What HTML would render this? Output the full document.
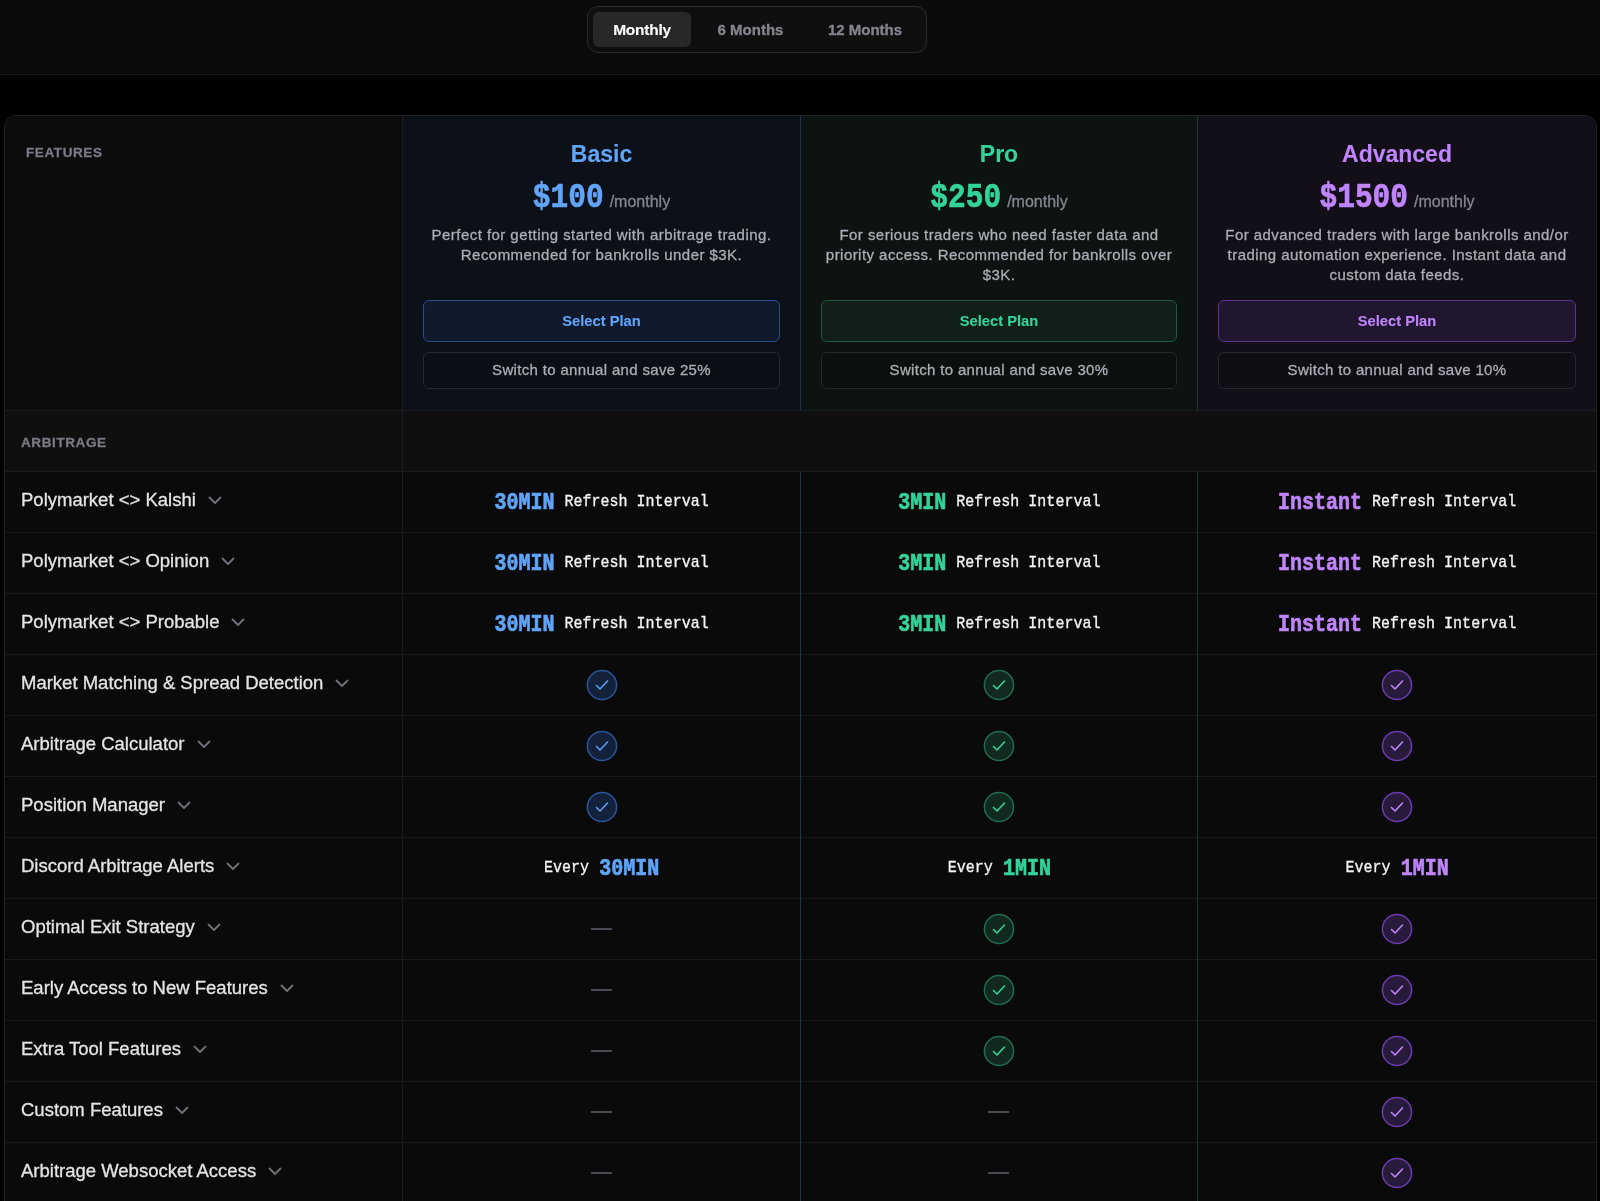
<!DOCTYPE html>
<html><head><meta charset="utf-8">
<style>
*{box-sizing:border-box;margin:0;padding:0}
html,body{-webkit-text-stroke-width:0.3px;width:1600px;height:1201px;overflow:hidden;background:#000;font-family:"Liberation Sans",sans-serif;color:#e4e4e7}
.topbar{will-change:transform;position:absolute;left:0;top:0;width:1600px;height:75px;background:#0b0b0b;border-bottom:1px solid #181818}
.toggle{position:absolute;left:587px;top:6px;width:340px;height:47px;border:1.5px solid #2b2b2b;border-radius:11px;background:#0f0f0f}
.pill{position:absolute;top:4.5px;height:35px;line-height:35px;font-weight:bold;color:#85858e;text-align:center;border-radius:6px}
.pill.active{background:#282828;color:#fff;font-size:15.5px;letter-spacing:-0.25px}
.pill{font-size:15px}
.card{will-change:transform;position:absolute;left:4px;top:115px;width:1593px;height:1200px;border:1px solid #232323;border-radius:12px;background:#0a0a0a;overflow:hidden}
.col{position:absolute;top:0}
.hdr{position:absolute;top:-1px;height:296px;border-bottom:1px solid #1c1c1c}
.label{position:absolute;font-size:13.5px;font-weight:bold;letter-spacing:0.6px;color:#7a7a85}
.title{position:absolute;left:0;right:0;text-align:center;font-size:23px;font-weight:bold}
.price{position:absolute;left:0;right:0;text-align:center;top:66.5px;height:36px}
.price b{display:inline-block;font-family:"Liberation Mono",monospace;font-size:29.5px;font-weight:bold;transform:scaleY(1.22);transform-origin:50% 75%}
.price span{position:relative;top:0.5px;font-size:16px;color:#85858e;margin-left:6px}
.desc{position:absolute;left:10px;right:10px;top:110px;text-align:center;font-size:15px;letter-spacing:0.45px;line-height:20px;color:#acacb4}
.sel{position:absolute;left:20px;right:20px;top:185px;height:42px;border-radius:6px;text-align:center;line-height:40px;font-size:14.7px;font-weight:bold}
.sw{position:absolute;left:20px;right:20px;top:237px;height:37px;border-radius:6px;border:1px solid #29292d;background:rgba(0,0,0,0.12);text-align:center;line-height:34px;font-size:15px;letter-spacing:0.33px;color:#acacb4}
.cat{position:absolute;left:0;top:295px;width:1591px;height:61px;background:#0f0f0f;border-bottom:1px solid #1c1c1c}
.row{position:absolute;left:0;width:1591px;height:61px;border-bottom:1px solid #1a1a1a}
.fname{position:absolute;left:16px;top:-2.5px;height:60px;line-height:60px;font-size:18.5px;color:#e4e4e7}
.chev{display:inline-block;vertical-align:middle;margin-left:11px;margin-top:-2px}
.cell{position:absolute;top:0;height:60px;display:flex;align-items:center;justify-content:center;font-family:"Liberation Mono",monospace;color:#f4f4f5;font-size:15px}
.cell b{display:inline-block;position:relative;top:0.5px;font-size:20px;font-weight:bold;margin-right:10px;transform:scaleY(1.18)}
.cell i{display:inline-block;position:relative;top:0.5px;font-style:normal;transform:scaleY(1.07)}
.vline{position:absolute;top:0;width:1px;height:1100px}
.blue{color:#60a5fa}.green{color:#34d399}.purple{color:#c084fc}
.dash{width:21px;height:2px;background:#4a4a52;margin-right:1px}
.sel,.title,.pill.active{-webkit-text-stroke-width:0.1px}
.cell b,.price b{-webkit-text-stroke-width:0.55px}
</style></head><body>
<div class="topbar">
  <div class="toggle">
    <div class="pill active" style="left:5px;width:98px">Monthly</div>
    <div class="pill" style="left:109px;width:107px">6 Months</div>
    <div class="pill" style="left:221px;width:112px">12 Months</div>
  </div>
</div>
<div class="card">
  <!-- header columns -->
  <div class="hdr" style="left:0;width:398px;background:#0c0c0c;border-right:1px solid #1c1c1c">
    <div class="label" style="left:21px;top:30px">FEATURES</div>
  </div>
  <div class="hdr" style="left:398px;width:398px;background:#0c1019;border-right:1px solid #1e3252">
    <div class="title blue" style="top:26px">Basic</div>
    <div class="price"><b class="blue">$100</b><span>/monthly</span></div>
    <div class="desc">Perfect for getting started with arbitrage trading.<br>Recommended for bankrolls under $3K.</div>
    <div class="sel blue" style="background:#111a2c;border:1px solid #2a4e8c">Select Plan</div>
    <div class="sw">Switch to annual and save 25%</div>
  </div>
  <div class="hdr" style="left:796px;width:397px;background:#0c1311;border-right:1px solid #1a3a30">
    <div class="title green" style="top:26px">Pro</div>
    <div class="price"><b class="green">$250</b><span>/monthly</span></div>
    <div class="desc">For serious traders who need faster data and<br>priority access. Recommended for bankrolls over<br>$3K.</div>
    <div class="sel green" style="background:#102019;border:1px solid #1d5a40">Select Plan</div>
    <div class="sw">Switch to annual and save 30%</div>
  </div>
  <div class="hdr" style="left:1193px;width:398px;background:#130f18">
    <div class="title purple" style="top:26px">Advanced</div>
    <div class="price"><b class="purple">$1500</b><span>/monthly</span></div>
    <div class="desc">For advanced traders with large bankrolls and/or<br>trading automation experience. Instant data and<br>custom data feeds.</div>
    <div class="sel purple" style="background:#21162f;border:1px solid #5b3490">Select Plan</div>
    <div class="sw">Switch to annual and save 10%</div>
  </div>
  <div class="cat"><div class="label" style="left:16px;top:24px">ARBITRAGE</div></div>
  <div class="row" style="top:356px"><div class="fname">Polymarket &lt;&gt; Kalshi<svg class="chev" width="16" height="16" viewBox="0 0 16 16"><path d="M2.5 5.5l5.5 5.5 5.5-5.5" fill="none" stroke="#71717a" stroke-width="1.8" stroke-linecap="round" stroke-linejoin="round"/></svg></div><div class="cell" style="left:397.75px;width:397.75px"><b class="blue">30MIN</b><i>Refresh Interval</i></div><div class="cell" style="left:795.5px;width:397.75px"><b class="green">3MIN</b><i>Refresh Interval</i></div><div class="cell" style="left:1193.25px;width:397.75px"><b class="purple">Instant</b><i>Refresh Interval</i></div></div>
<div class="row" style="top:417px"><div class="fname">Polymarket &lt;&gt; Opinion<svg class="chev" width="16" height="16" viewBox="0 0 16 16"><path d="M2.5 5.5l5.5 5.5 5.5-5.5" fill="none" stroke="#71717a" stroke-width="1.8" stroke-linecap="round" stroke-linejoin="round"/></svg></div><div class="cell" style="left:397.75px;width:397.75px"><b class="blue">30MIN</b><i>Refresh Interval</i></div><div class="cell" style="left:795.5px;width:397.75px"><b class="green">3MIN</b><i>Refresh Interval</i></div><div class="cell" style="left:1193.25px;width:397.75px"><b class="purple">Instant</b><i>Refresh Interval</i></div></div>
<div class="row" style="top:478px"><div class="fname">Polymarket &lt;&gt; Probable<svg class="chev" width="16" height="16" viewBox="0 0 16 16"><path d="M2.5 5.5l5.5 5.5 5.5-5.5" fill="none" stroke="#71717a" stroke-width="1.8" stroke-linecap="round" stroke-linejoin="round"/></svg></div><div class="cell" style="left:397.75px;width:397.75px"><b class="blue">30MIN</b><i>Refresh Interval</i></div><div class="cell" style="left:795.5px;width:397.75px"><b class="green">3MIN</b><i>Refresh Interval</i></div><div class="cell" style="left:1193.25px;width:397.75px"><b class="purple">Instant</b><i>Refresh Interval</i></div></div>
<div class="row" style="top:539px"><div class="fname">Market Matching &amp; Spread Detection<svg class="chev" width="16" height="16" viewBox="0 0 16 16"><path d="M2.5 5.5l5.5 5.5 5.5-5.5" fill="none" stroke="#71717a" stroke-width="1.8" stroke-linecap="round" stroke-linejoin="round"/></svg></div><div class="cell" style="left:397.75px;width:397.75px"><svg width="32" height="32" viewBox="0 0 32 32"><circle cx="16" cy="16" r="14.6" fill="#14213b" stroke="#28559c" stroke-width="1.5"/><path d="M10.5 16.5l3.5 3.5 7.5-8" fill="none" stroke="#5b9ef0" stroke-width="1.6" stroke-linecap="round" stroke-linejoin="round"/></svg></div><div class="cell" style="left:795.5px;width:397.75px"><svg width="32" height="32" viewBox="0 0 32 32"><circle cx="16" cy="16" r="14.6" fill="#11291f" stroke="#1f6b4d" stroke-width="1.5"/><path d="M10.5 16.5l3.5 3.5 7.5-8" fill="none" stroke="#34d399" stroke-width="1.6" stroke-linecap="round" stroke-linejoin="round"/></svg></div><div class="cell" style="left:1193.25px;width:397.75px"><svg width="32" height="32" viewBox="0 0 32 32"><circle cx="16" cy="16" r="14.6" fill="#271a3b" stroke="#6a3bad" stroke-width="1.5"/><path d="M10.5 16.5l3.5 3.5 7.5-8" fill="none" stroke="#c084fc" stroke-width="1.6" stroke-linecap="round" stroke-linejoin="round"/></svg></div></div>
<div class="row" style="top:600px"><div class="fname">Arbitrage Calculator<svg class="chev" width="16" height="16" viewBox="0 0 16 16"><path d="M2.5 5.5l5.5 5.5 5.5-5.5" fill="none" stroke="#71717a" stroke-width="1.8" stroke-linecap="round" stroke-linejoin="round"/></svg></div><div class="cell" style="left:397.75px;width:397.75px"><svg width="32" height="32" viewBox="0 0 32 32"><circle cx="16" cy="16" r="14.6" fill="#14213b" stroke="#28559c" stroke-width="1.5"/><path d="M10.5 16.5l3.5 3.5 7.5-8" fill="none" stroke="#5b9ef0" stroke-width="1.6" stroke-linecap="round" stroke-linejoin="round"/></svg></div><div class="cell" style="left:795.5px;width:397.75px"><svg width="32" height="32" viewBox="0 0 32 32"><circle cx="16" cy="16" r="14.6" fill="#11291f" stroke="#1f6b4d" stroke-width="1.5"/><path d="M10.5 16.5l3.5 3.5 7.5-8" fill="none" stroke="#34d399" stroke-width="1.6" stroke-linecap="round" stroke-linejoin="round"/></svg></div><div class="cell" style="left:1193.25px;width:397.75px"><svg width="32" height="32" viewBox="0 0 32 32"><circle cx="16" cy="16" r="14.6" fill="#271a3b" stroke="#6a3bad" stroke-width="1.5"/><path d="M10.5 16.5l3.5 3.5 7.5-8" fill="none" stroke="#c084fc" stroke-width="1.6" stroke-linecap="round" stroke-linejoin="round"/></svg></div></div>
<div class="row" style="top:661px"><div class="fname">Position Manager<svg class="chev" width="16" height="16" viewBox="0 0 16 16"><path d="M2.5 5.5l5.5 5.5 5.5-5.5" fill="none" stroke="#71717a" stroke-width="1.8" stroke-linecap="round" stroke-linejoin="round"/></svg></div><div class="cell" style="left:397.75px;width:397.75px"><svg width="32" height="32" viewBox="0 0 32 32"><circle cx="16" cy="16" r="14.6" fill="#14213b" stroke="#28559c" stroke-width="1.5"/><path d="M10.5 16.5l3.5 3.5 7.5-8" fill="none" stroke="#5b9ef0" stroke-width="1.6" stroke-linecap="round" stroke-linejoin="round"/></svg></div><div class="cell" style="left:795.5px;width:397.75px"><svg width="32" height="32" viewBox="0 0 32 32"><circle cx="16" cy="16" r="14.6" fill="#11291f" stroke="#1f6b4d" stroke-width="1.5"/><path d="M10.5 16.5l3.5 3.5 7.5-8" fill="none" stroke="#34d399" stroke-width="1.6" stroke-linecap="round" stroke-linejoin="round"/></svg></div><div class="cell" style="left:1193.25px;width:397.75px"><svg width="32" height="32" viewBox="0 0 32 32"><circle cx="16" cy="16" r="14.6" fill="#271a3b" stroke="#6a3bad" stroke-width="1.5"/><path d="M10.5 16.5l3.5 3.5 7.5-8" fill="none" stroke="#c084fc" stroke-width="1.6" stroke-linecap="round" stroke-linejoin="round"/></svg></div></div>
<div class="row" style="top:722px"><div class="fname">Discord Arbitrage Alerts<svg class="chev" width="16" height="16" viewBox="0 0 16 16"><path d="M2.5 5.5l5.5 5.5 5.5-5.5" fill="none" stroke="#71717a" stroke-width="1.8" stroke-linecap="round" stroke-linejoin="round"/></svg></div><div class="cell" style="left:397.75px;width:397.75px"><i>Every</i><b class="blue" style="margin-left:10px;margin-right:0">30MIN</b></div><div class="cell" style="left:795.5px;width:397.75px"><i>Every</i><b class="green" style="margin-left:10px;margin-right:0">1MIN</b></div><div class="cell" style="left:1193.25px;width:397.75px"><i>Every</i><b class="purple" style="margin-left:10px;margin-right:0">1MIN</b></div></div>
<div class="row" style="top:783px"><div class="fname">Optimal Exit Strategy<svg class="chev" width="16" height="16" viewBox="0 0 16 16"><path d="M2.5 5.5l5.5 5.5 5.5-5.5" fill="none" stroke="#71717a" stroke-width="1.8" stroke-linecap="round" stroke-linejoin="round"/></svg></div><div class="cell" style="left:397.75px;width:397.75px"><div class="dash"></div></div><div class="cell" style="left:795.5px;width:397.75px"><svg width="32" height="32" viewBox="0 0 32 32"><circle cx="16" cy="16" r="14.6" fill="#11291f" stroke="#1f6b4d" stroke-width="1.5"/><path d="M10.5 16.5l3.5 3.5 7.5-8" fill="none" stroke="#34d399" stroke-width="1.6" stroke-linecap="round" stroke-linejoin="round"/></svg></div><div class="cell" style="left:1193.25px;width:397.75px"><svg width="32" height="32" viewBox="0 0 32 32"><circle cx="16" cy="16" r="14.6" fill="#271a3b" stroke="#6a3bad" stroke-width="1.5"/><path d="M10.5 16.5l3.5 3.5 7.5-8" fill="none" stroke="#c084fc" stroke-width="1.6" stroke-linecap="round" stroke-linejoin="round"/></svg></div></div>
<div class="row" style="top:844px"><div class="fname">Early Access to New Features<svg class="chev" width="16" height="16" viewBox="0 0 16 16"><path d="M2.5 5.5l5.5 5.5 5.5-5.5" fill="none" stroke="#71717a" stroke-width="1.8" stroke-linecap="round" stroke-linejoin="round"/></svg></div><div class="cell" style="left:397.75px;width:397.75px"><div class="dash"></div></div><div class="cell" style="left:795.5px;width:397.75px"><svg width="32" height="32" viewBox="0 0 32 32"><circle cx="16" cy="16" r="14.6" fill="#11291f" stroke="#1f6b4d" stroke-width="1.5"/><path d="M10.5 16.5l3.5 3.5 7.5-8" fill="none" stroke="#34d399" stroke-width="1.6" stroke-linecap="round" stroke-linejoin="round"/></svg></div><div class="cell" style="left:1193.25px;width:397.75px"><svg width="32" height="32" viewBox="0 0 32 32"><circle cx="16" cy="16" r="14.6" fill="#271a3b" stroke="#6a3bad" stroke-width="1.5"/><path d="M10.5 16.5l3.5 3.5 7.5-8" fill="none" stroke="#c084fc" stroke-width="1.6" stroke-linecap="round" stroke-linejoin="round"/></svg></div></div>
<div class="row" style="top:905px"><div class="fname">Extra Tool Features<svg class="chev" width="16" height="16" viewBox="0 0 16 16"><path d="M2.5 5.5l5.5 5.5 5.5-5.5" fill="none" stroke="#71717a" stroke-width="1.8" stroke-linecap="round" stroke-linejoin="round"/></svg></div><div class="cell" style="left:397.75px;width:397.75px"><div class="dash"></div></div><div class="cell" style="left:795.5px;width:397.75px"><svg width="32" height="32" viewBox="0 0 32 32"><circle cx="16" cy="16" r="14.6" fill="#11291f" stroke="#1f6b4d" stroke-width="1.5"/><path d="M10.5 16.5l3.5 3.5 7.5-8" fill="none" stroke="#34d399" stroke-width="1.6" stroke-linecap="round" stroke-linejoin="round"/></svg></div><div class="cell" style="left:1193.25px;width:397.75px"><svg width="32" height="32" viewBox="0 0 32 32"><circle cx="16" cy="16" r="14.6" fill="#271a3b" stroke="#6a3bad" stroke-width="1.5"/><path d="M10.5 16.5l3.5 3.5 7.5-8" fill="none" stroke="#c084fc" stroke-width="1.6" stroke-linecap="round" stroke-linejoin="round"/></svg></div></div>
<div class="row" style="top:966px"><div class="fname">Custom Features<svg class="chev" width="16" height="16" viewBox="0 0 16 16"><path d="M2.5 5.5l5.5 5.5 5.5-5.5" fill="none" stroke="#71717a" stroke-width="1.8" stroke-linecap="round" stroke-linejoin="round"/></svg></div><div class="cell" style="left:397.75px;width:397.75px"><div class="dash"></div></div><div class="cell" style="left:795.5px;width:397.75px"><div class="dash"></div></div><div class="cell" style="left:1193.25px;width:397.75px"><svg width="32" height="32" viewBox="0 0 32 32"><circle cx="16" cy="16" r="14.6" fill="#271a3b" stroke="#6a3bad" stroke-width="1.5"/><path d="M10.5 16.5l3.5 3.5 7.5-8" fill="none" stroke="#c084fc" stroke-width="1.6" stroke-linecap="round" stroke-linejoin="round"/></svg></div></div>
<div class="row" style="top:1027px"><div class="fname">Arbitrage Websocket Access<svg class="chev" width="16" height="16" viewBox="0 0 16 16"><path d="M2.5 5.5l5.5 5.5 5.5-5.5" fill="none" stroke="#71717a" stroke-width="1.8" stroke-linecap="round" stroke-linejoin="round"/></svg></div><div class="cell" style="left:397.75px;width:397.75px"><div class="dash"></div></div><div class="cell" style="left:795.5px;width:397.75px"><div class="dash"></div></div><div class="cell" style="left:1193.25px;width:397.75px"><svg width="32" height="32" viewBox="0 0 32 32"><circle cx="16" cy="16" r="14.6" fill="#271a3b" stroke="#6a3bad" stroke-width="1.5"/><path d="M10.5 16.5l3.5 3.5 7.5-8" fill="none" stroke="#c084fc" stroke-width="1.6" stroke-linecap="round" stroke-linejoin="round"/></svg></div></div>
<div class="vline" style="left:397px;top:295px;background:#1c1c1c"></div><div class="vline" style="left:795px;top:356px;background:#1e3252"></div><div class="vline" style="left:1192px;top:356px;background:#1a3a30"></div>
</div>
</body></html>
